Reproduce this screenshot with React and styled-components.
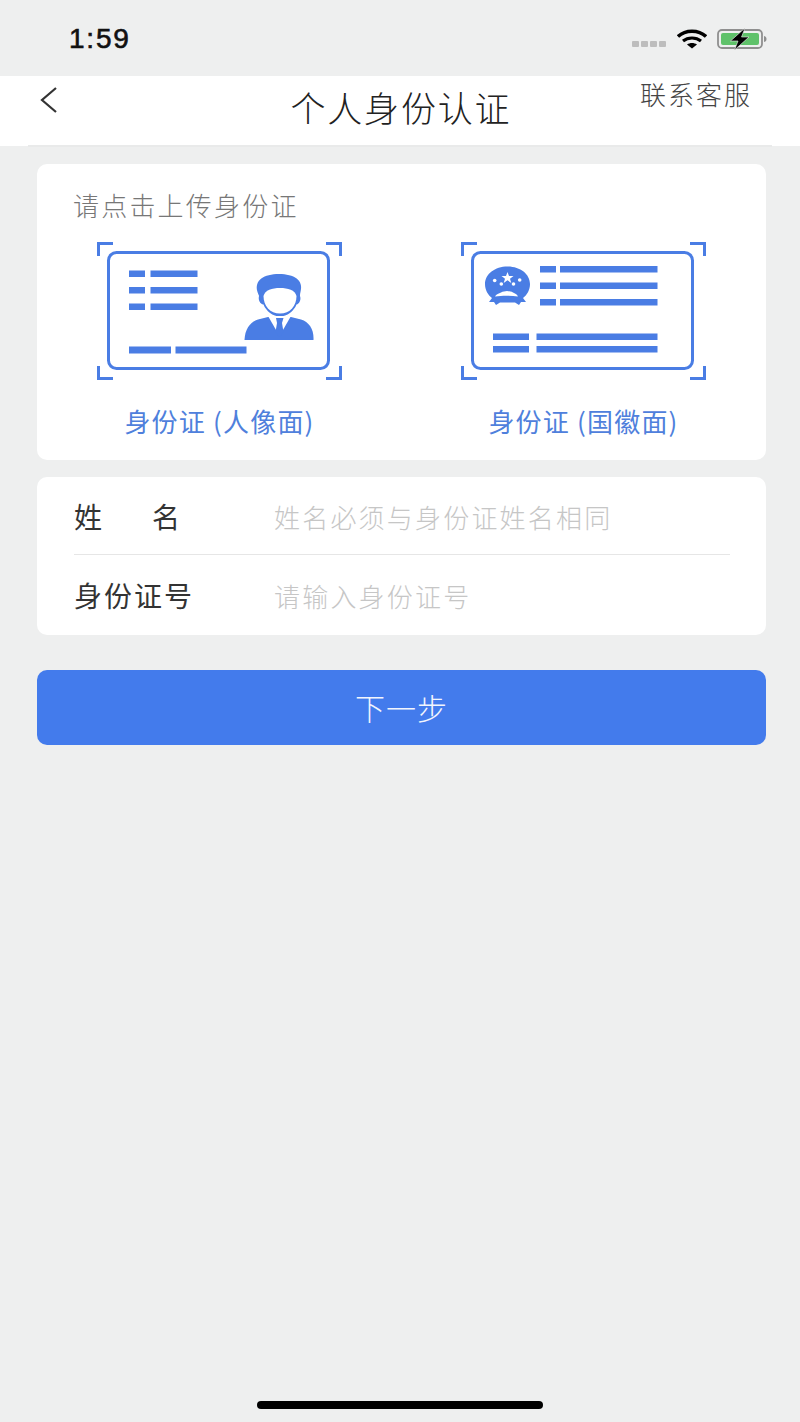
import React from 'react';
import styled, { createGlobalStyle } from 'styled-components';

const BLUE = '#4a7de4';

const Brackets = () => (
    <g fill="none" stroke={BLUE} strokeWidth="3">
        <path d="M1.5 14V1.500H16" />
        <path d="M229 1.500H243.500V14" />
        <path d="M1.5 124V136.500H16" />
        <path d="M229 136.500H243.500V124" />
        <rect x="11.500" y="10.500" width="220" height="116" rx="8" />
    </g>
);

const PortraitIcon = () => (
    <CardSvg viewBox="0 0 245 138">
        <Brackets />
        <g fill={BLUE}>
            <rect x="32" y="28.500" width="16" height="6.500" />
            <rect x="53.500" y="28.500" width="47" height="6.500" />
            <rect x="32" y="45" width="16" height="6.500" />
            <rect x="53.500" y="45" width="47" height="6.500" />
            <rect x="32" y="61.500" width="16" height="6.500" />
            <rect x="53.500" y="61.500" width="47" height="6.500" />
            <rect x="32" y="104.500" width="42" height="7" />
            <rect x="78.500" y="104.500" width="71" height="7" />
            <path d="M160.500 50C157 38 167 32 182 32C197 32 207 38 203.500 50C203 52 203 53 203 54C204.500 58 202 62 199.500 62.500C197 69 190 74.500 183 74.500C176 74.500 169 69 166.500 62.500C163 62 161 58 162 54C162 53 161 52 160.500 50Z" />
            <path d="M166.500 54C168 48 175 46 183 46C191 46 198 48 199.500 54C199.500 59 198 63 195 66.500C192 70 188 71.500 183 71.500C178 71.500 174 70 171 66.500C168 63 166.500 59 166.500 54Z" fill="#fff" />
            <path d="M147.500 98C148 87 153 80 161 77.500L171 75H194L204 77.500C212 80 217 87 216.500 98Z" />
        </g>
        <path d="M171 74L182.500 94L194 74Z" fill="#fff" />
        <path d="M179 76H186.500L185 81L186.500 90L182.500 95L178.500 90L180 81Z" fill={BLUE} />
    </CardSvg>
);

const EmblemIcon = () => (
    <CardSvg viewBox="0 0 245 138">
        <Brackets />
        <g fill={BLUE}>
            <rect x="79" y="24" width="16" height="6.500" />
            <rect x="99" y="24" width="97.500" height="6.500" />
            <rect x="79" y="40.500" width="16" height="6.500" />
            <rect x="99" y="40.500" width="97.500" height="6.500" />
            <rect x="79" y="57" width="16" height="6.500" />
            <rect x="99" y="57" width="97.500" height="6.500" />
            <rect x="32" y="91.500" width="36" height="6.500" />
            <rect x="75.500" y="91.500" width="121" height="6.500" />
            <rect x="32" y="104" width="36" height="6.500" />
            <rect x="75.500" y="104" width="121" height="6.500" />
            <path d="M46.500 24.500C59 24.500 69 32 69 42C69 48 66 53 62 56L65 60L60 60L58 63L54 60.500H39L35 63L33 60L28 60L31 56C27 53 24 48 24 42C24 32 34 24.500 46.500 24.500Z" />
        </g>
        <g fill="#fff">
            <path d="M46.500 30L48 34H52.500L49 36.700L50.300 41L46.500 38.300L42.700 41L44 36.700L40.500 34H45Z" />
            <circle cx="33.700" cy="38.500" r="1.800" />
            <circle cx="58.700" cy="38" r="1.800" />
            <circle cx="40.300" cy="42" r="1.800" />
            <circle cx="52.500" cy="42" r="1.800" />
            <path d="M34 54.500C35 52 38 51.500 40 50.500C42 49 44 49.500 46 49C48 49.500 50 49 52 50.500C54 51.500 56 52 57 54.500C50 53.500 41 53.500 34 54.500Z" />
        </g>
    </CardSvg>
);

const App = () => {
    return (
        <>
            <GlobalStyle />
            <Page>
                <StatusBar>
                    <Clock>1:59</Clock>
                    <StatusIcons>
                        <Signal>
                            <i /><i /><i /><i />
                        </Signal>
                        <svg width="30" height="20" viewBox="0 0 30 20">
                            <path d="M1 7.500C8.500 0.500 21.500 0.500 29 7.500" fill="none" stroke="#000" strokeWidth="3.400" />
                            <path d="M6 12C11 8 19 8 24 12" fill="none" stroke="#000" strokeWidth="3.200" />
                            <path d="M15 19.500L10 15.500C13 13.500 17 13.500 20 15.500Z" fill="#000" />
                        </svg>
                        <svg width="50" height="22" viewBox="0 0 50 22">
                            <rect x="1" y="2" width="44" height="18" rx="4" fill="none" stroke="#8f8f8f" strokeWidth="1.800" />
                            <rect x="4" y="5" width="38" height="12" rx="2" fill="#5fc26a" />
                            <path d="M47 8C49 8.500 49.500 9.500 49.500 11C49.500 12.500 49 13.500 47 14Z" fill="#8f8f8f" />
                            <path d="M28 0L13.500 13H21L17.500 22L32 9H24.500Z" fill="#000" stroke="#eeefef" strokeWidth="0.600" />
                        </svg>
                    </StatusIcons>
                </StatusBar>
                <NavBar>
                    <BackIcon width="20" height="28" viewBox="0 0 20 28">
                        <path d="M18 1L4 13L18 25" fill="none" stroke="#333" strokeWidth="2.200" />
                    </BackIcon>
                    <NavTitle>个人身份认证</NavTitle>
                    <NavAction>联系客服</NavAction>
                </NavBar>
                <Content>
                    <UploadCard>
                        <UploadHint>请点击上传身份证</UploadHint>
                        <UploadRow>
                            <UploadItem>
                                <PortraitIcon />
                                <UploadLabel>身份证 (人像面)</UploadLabel>
                            </UploadItem>
                            <UploadItem>
                                <EmblemIcon />
                                <UploadLabel>身份证 (国徽面)</UploadLabel>
                            </UploadItem>
                        </UploadRow>
                    </UploadCard>
                    <FormCard>
                        <FormRow>
                            <FieldLabel>
                                <span>姓</span>
                                <span>名</span>
                            </FieldLabel>
                            <Placeholder>姓名必须与身份证姓名相同</Placeholder>
                        </FormRow>
                        <FormRow $last>
                            <FieldLabel>身份证号</FieldLabel>
                            <Placeholder>请输入身份证号</Placeholder>
                        </FormRow>
                    </FormCard>
                    <NextButton>下一步</NextButton>
                </Content>
                <HomeBar />
            </Page>
        </>
    );
};

export default App;

const GlobalStyle = createGlobalStyle`
  html, body {
    margin: 0;
    padding: 0;
  }
  body {
    font-family: "Noto Sans CJK SC", "Liberation Sans", sans-serif;
  }
`;
const Page = styled.div`
  width: 800px;
  height: 1422px;
  background-color: #eeefef;
  display: flex;
  flex-direction: column;
  overflow: hidden;
`;
const StatusBar = styled.div`
  height: 76px;
  flex-shrink: 0;
  box-sizing: border-box;
  padding: 2px 33px 0 69px;
  display: flex;
  justify-content: space-between;
  align-items: center;
`;
const Clock = styled.div`
  font-family: "Liberation Sans", sans-serif;
  font-size: 28px;
  letter-spacing: 1.800px;
  color: #111;
  -webkit-text-stroke: 0.6px #111;
`;
const StatusIcons = styled.div`
  display: flex;
  align-items: center;
  gap: 10px;
`;
const Signal = styled.div`
  display: flex;
  gap: 2px;
  margin: 10px 1px 0 0;

  i {
    width: 7px;
    height: 6px;
    border-radius: 1px;
    background-color: #bdbdbd;
  }
`;
const NavBar = styled.div`
  height: 70px;
  flex-shrink: 0;
  background-color: #fff;
  position: relative;
  display: flex;
  justify-content: center;
  padding-top: 9px;
  box-sizing: border-box;

  &::after {
    content: '';
    position: absolute;
    left: 28px;
    right: 28px;
    bottom: -1px;
    height: 2px;
    background-color: #e9eaea;
  }
`;
const BackIcon = styled.svg`
  position: absolute;
  left: 38px;
  top: 11px;
`;
const NavTitle = styled.div`
  font-size: 35px;
  line-height: 44px;
  letter-spacing: 1.800px;
  margin-right: -1.800px;
  font-weight: 300;
  color: #222;
`;
const NavAction = styled.div`
  position: absolute;
  right: 48px;
  top: 0;
  font-size: 26px;
  line-height: 36px;
  letter-spacing: 2px;
  font-weight: 300;
  color: #444;
`;
const Content = styled.div`
  box-sizing: border-box;
  padding: 18px 34px 0 37px;
  display: flex;
  flex-direction: column;
`;
const UploadCard = styled.div`
  height: 296px;
  box-sizing: border-box;
  background-color: #fff;
  border-radius: 10px;
  padding: 24px 60px 0 36px;
`;
const UploadHint = styled.div`
  font-size: 26px;
  line-height: 34px;
  letter-spacing: 2.200px;
  font-weight: 300;
  color: #777;
`;
const UploadRow = styled.div`
  display: flex;
  justify-content: space-between;
  margin: 20px 0 0 24px;
`;
const UploadItem = styled.div`
  width: 245px;
  display: flex;
  flex-direction: column;
  align-items: center;
`;
const CardSvg = styled.svg`
  width: 245px;
  height: 138px;
  display: block;
`;
const UploadLabel = styled.div`
  margin-top: 25px;
  font-size: 26px;
  line-height: 32px;
  letter-spacing: 1.200px;
  white-space: nowrap;
  color: #4f80dc;
`;
const FormCard = styled.div`
  margin-top: 17px;
  height: 158px;
  box-sizing: border-box;
  background-color: #fff;
  border-radius: 10px;
  padding: 0 36px 0 37px;
  display: flex;
  flex-direction: column;
`;
const FormRow = styled.div`
  height: ${(p) => (p.$last ? '80px' : '78px')};
  box-sizing: border-box;
  display: flex;
  align-items: center;
  border-bottom: ${(p) => (p.$last ? 'none' : '1px solid #e6e6e6')};
`;
const FieldLabel = styled.div`
  width: 200px;
  flex-shrink: 0;
  box-sizing: border-box;
  padding-right: 92px;
  display: flex;
  justify-content: space-between;
  font-size: 28px;
  letter-spacing: 2px;
  color: #333;
  white-space: nowrap;
`;
const Placeholder = styled.div`
  font-size: 26px;
  letter-spacing: 2.200px;
  font-weight: 300;
  color: #c6c6c6;
  white-space: nowrap;
  padding-top: 1px;
`;
const NextButton = styled.div`
  margin-top: 35px;
  height: 75px;
  box-sizing: border-box;
  padding-bottom: 2px;
  border-radius: 10px;
  background-color: #437bec;
  color: #f2f5fd;
  font-size: 30px;
  letter-spacing: 1px;
  font-weight: 300;
  display: flex;
  align-items: center;
  justify-content: center;
`;
const HomeBar = styled.div`
  width: 286px;
  height: 8px;
  border-radius: 4px;
  background-color: #000;
  margin: auto auto 13px 257px;
`;
